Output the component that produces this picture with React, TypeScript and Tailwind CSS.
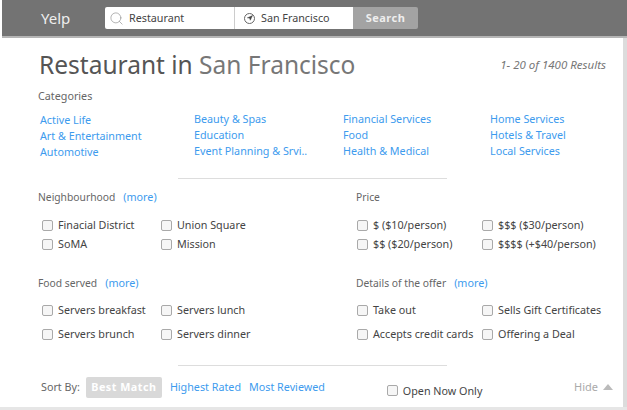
import { Search, Navigation } from "lucide-react";

const categories = [
  { width: "w-[154px]", shift: "", items: ["Active Life", "Art & Entertainment", "Automotive"] },
  { width: "w-[149px]", shift: "-mt-px", items: ["Beauty & Spas", "Education", "Event Planning & Srvi.."] },
  { width: "w-[147px]", shift: "-mt-px", items: ["Financial Services", "Food", "Health & Medical"] },
  { width: "w-[110px]", shift: "-mt-px", items: ["Home Services", "Hotels & Travel", "Local Services"] },
];

function Check({ label, className = "" }: { label: string; className?: string }) {
  return (
    <div className={`flex items-center ${className}`}>
      <span className="w-[11px] h-[11px] rounded-[2px] border border-[#a9a9a9] bg-[#f6f6f6] shrink-0" />
      <span className="ml-[5px] text-[10.75px] leading-[14px] text-[#444] whitespace-nowrap">{label}</span>
    </div>
  );
}

function Group({
  title,
  more,
  rows,
  gapClass,
  firstWidth,
  topClass,
}: {
  title: string;
  more?: boolean;
  rows: string[][];
  gapClass: string;
  firstWidth: string;
  topClass: string;
}) {
  return (
    <div>
      <div className="text-[10.3px] leading-[14px] text-[#666] h-[14px]">
        {title}
        {more && <span className="ml-[8px] text-[10.75px] text-[#3d9bee]">(more)</span>}
      </div>
      <div className={`flex flex-col ${gapClass} ${topClass}`}>
        {rows.map((r) => (
          <div key={r[0]} className="flex">
            <Check label={r[0]} className={firstWidth} />
            <Check label={r[1]} />
          </div>
        ))}
      </div>
    </div>
  );
}

export default function App() {
  return (
    <div className="w-[627px] h-[410px] overflow-hidden bg-white font-['Noto_Sans',sans-serif] flex flex-col">
      {/* Top bar */}
      <div className="h-[38px] ml-[2px] bg-[#737373] border-b-2 border-[#b5b5b5] flex items-center shrink-0">
        <div className="w-[103px] pl-[39px] text-[15px] text-[#eee]">Yelp</div>
        <div className="flex h-[22px] w-[313px] rounded-[2px] overflow-hidden">
          <div className="w-[130px] bg-white border-r border-[#ccc] flex items-center pl-[4px]">
            <Search size={15} strokeWidth={1} className="text-[#888]" />
            <span className="ml-[5px] text-[10.75px] text-[#444]">Restaurant</span>
          </div>
          <div className="w-[118px] bg-white flex items-center pl-[9px]">
            <span className="w-[11px] h-[11px] rounded-full border border-[#666] flex items-center justify-center">
              <Navigation size={6} className="text-[#444] fill-[#444]" />
            </span>
            <span className="ml-[6px] text-[10.75px] text-[#444]">San Francisco</span>
          </div>
          <div className="flex-1 bg-[#a3a3a3] flex items-center justify-center text-[11px] font-bold tracking-[0.5px] text-[#eee]">
            Search
          </div>
        </div>
      </div>

      <div className="flex-1 flex border-r-[4px] border-[#dcdcdc] min-h-0">
        <div className="flex-1 flex flex-col min-w-0">
          <div className="flex items-center justify-between pl-[39px] pr-[17px] h-[51px] shrink-0">
            <h1 className="text-[24.5px] text-[#555] leading-none pt-[3px]">
              Restaurant in <span className="text-[#777]">San Francisco</span>
            </h1>
            <span className="text-[11.5px] italic text-[#777] pt-[2px]">1- 20 of 1400 Results</span>
          </div>

          <div className="pl-[38px] text-[10.75px] leading-[14px] text-[#666]">Categories</div>
          <div className="flex pl-[40px] mt-[9px]">
            {categories.map((c) => (
              <div key={c.items[0]} className={`${c.width} ${c.shift} text-[10.75px] leading-[16px] text-[#3d9bee] whitespace-nowrap`}>
                {c.items.map((i) => (
                  <div key={i}>{i}</div>
                ))}
              </div>
            ))}
          </div>

          <div className="h-px w-[269px] bg-[#ddd] ml-[178px] mt-[18px]" />

          <div className="flex mt-[11px] pl-[38px]">
            <div className="w-[318px]">
              <Group
                title="Neighbourhood"
                more
                firstWidth="w-[123px] pl-[4px]"
                gapClass="gap-[5px]"
                topClass="mt-[14px]"
                rows={[
                  ["Finacial District", "Union Square"],
                  ["SoMA", "Mission"],
                ]}
              />
              <div className="mt-[25px]">
                <Group
                  title="Food served"
                  more
                  firstWidth="w-[123px] pl-[4px]"
                  gapClass="gap-[10px]"
                  topClass="mt-[13px]"
                  rows={[
                    ["Servers breakfast", "Servers lunch"],
                    ["Servers brunch", "Servers dinner"],
                  ]}
                />
              </div>
            </div>
            <div>
              <Group
                title="Price"
                firstWidth="w-[126px] pl-[1px]"
                gapClass="gap-[5px]"
                topClass="mt-[14px]"
                rows={[
                  ["$ ($10/person)", "$$$ ($30/person)"],
                  ["$$ ($20/person)", "$$$$ (+$40/person)"],
                ]}
              />
              <div className="mt-[25px]">
                <Group
                  title="Details of the offer"
                  more
                  firstWidth="w-[126px] pl-[1px]"
                  gapClass="gap-[10px]"
                  topClass="mt-[13px]"
                  rows={[
                    ["Take out", "Sells Gift Certificates"],
                    ["Accepts credit cards", "Offering a Deal"],
                  ]}
                />
              </div>
            </div>
          </div>

          <div className="h-px w-[269px] bg-[#ddd] ml-[178px] mt-[24px]" />

          <div className="flex items-center pl-[41px] pr-[10px] mt-[10px] h-[22px] text-[10.75px]">
            <span className="text-[#666]">Sort By:</span>
            <span className="ml-[6px] w-[76px] h-[21px] rounded-[2px] bg-[#d9d9d9] text-white font-bold tracking-[0.5px] flex items-center justify-center">
              Best Match
            </span>
            <span className="ml-[8px] text-[#3d9bee]">Highest Rated</span>
            <span className="ml-[8px] text-[#3d9bee]">Most Reviewed</span>
            <Check label="Open Now Only" className="ml-[62px] pt-[7px]" />
            <span className="ml-auto text-[#aaa] text-[11px]">Hide</span>
            <span className="ml-[5px] w-0 h-0 border-x-[5px] border-x-transparent border-b-[6px] border-b-[#bbb]" />
          </div>
        </div>
      </div>
      <div className="h-[3px] bg-[#e6e6e6] shrink-0" />
    </div>
  );
}
